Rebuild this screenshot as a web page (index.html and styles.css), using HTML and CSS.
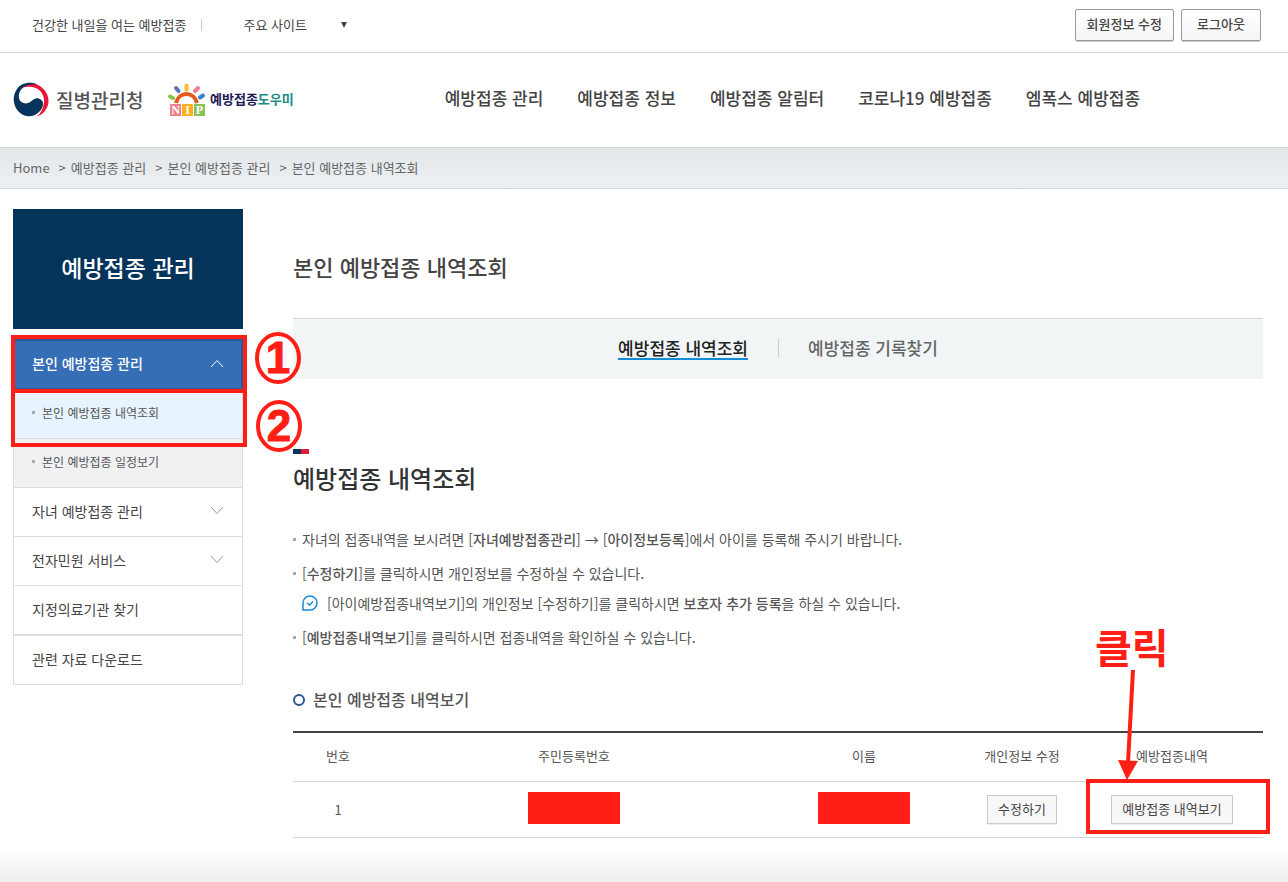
FILE: index.html
```
<!DOCTYPE html>
<html lang="ko">

<head>
    <meta charset="utf-8">
    <meta name="viewport" content="width=device-width, initial-scale=1.0">
    <title>예방접종도우미</title>
    <link rel="stylesheet" href="styles.css">
</head>

<body>
    <div class="topbar">
        <a href="#" class="slogan">건강한 내일을 여는 예방접종</a>
        <button type="button" class="sites">주요 사이트 <span class="caret"></span></button>
        <div class="member">
            <button type="button">회원정보 수정</button>
            <button type="button">로그아웃</button>
        </div>
    </div>

    <header>
        <a href="#" class="logo logo-kdca">
            <svg width="36" height="36" viewBox="0 0 36 36" aria-hidden="true">
                <path fill="#e8173a" d="M6 8C10 2 18 0 25 3C33 7 37 15 35 23C33 29 29 33 24 34.500C28 31 31 25 31 19C31 10 25 6 19 5C13 4 9 5 6 8Z"/>
                <path fill="#06345a" d="M25 2.500C17-1 8 1 4 7C-1 14 0 23 5 29C11 36 21 36 27 29C31 24 31 19 27 17C23 15 20 18 17 20C13 23 7 21 6 16C5 11 8 6 13 3.500C17 2 21 2 25 2.500Z"/>
            </svg>
            <span>질병관리청</span>
        </a>
        <a href="#" class="logo logo-nip">
            <svg width="38" height="34" viewBox="0 0 38 34" aria-hidden="true">
                <g fill="none" stroke-width="4" stroke-linecap="round">
                    <path stroke="#8cc63f" d="M3 13.500L6 15"/>
                    <path stroke="#5b74b8" d="M9 5L11.500 8"/>
                    <path stroke="#fdb92e" d="M19.500 2.500V6.500"/>
                    <path stroke="#f07f8e" d="M31 5L28 8"/>
                    <path stroke="#3b82cc" d="M36 12.500L33 14.500"/>
                    <path stroke="#e35a1c" stroke-linecap="butt" d="M9 20C12 8 27 8 30 20"/>
                </g>
                <rect x="3" y="21" width="11" height="12" fill="#f07f8e"/>
                <rect x="15" y="21" width="11" height="12" fill="#fdb022"/>
                <rect x="27" y="21" width="11" height="12" fill="#86c25a"/>
                <g class="nip-letters">
                    <text x="8.500" y="31">N</text>
                    <text x="20.500" y="31">I</text>
                    <text x="32.500" y="31">P</text>
                </g>
            </svg>
            <span>예방접종<em>도우미</em></span>
        </a>
        <nav>
            <a href="#">예방접종 관리</a>
            <a href="#">예방접종 정보</a>
            <a href="#">예방접종 알림터</a>
            <a href="#">코로나19 예방접종</a>
            <a href="#">엠폭스 예방접종</a>
        </nav>
    </header>

    <div class="breadcrumb">
        <a href="#">Home</a>
        <a href="#">예방접종 관리</a>
        <a href="#">본인 예방접종 관리</a>
        <a href="#">본인 예방접종 내역조회</a>
    </div>

    <div class="container">
        <aside>
            <h2>예방접종 관리</h2>
            <ul class="menu">
                <li class="open">
                    <a href="#">본인 예방접종 관리
                        <svg width="14" height="9" viewBox="0 0 14 9"><path d="M1 8L7 1.500L13 8"/></svg>
                    </a>
                    <span class="frame frame-menu"></span>
                    <span class="frame frame-sub"></span>
                    <svg class="step step-one" width="48" height="54" viewBox="0 0 48 54">
                        <ellipse cx="24" cy="27" rx="21" ry="24"/>
                        <text x="24" y="42">1</text>
                    </svg>
                    <svg class="step step-two" width="48" height="54" viewBox="0 0 48 54">
                        <ellipse cx="24" cy="27" rx="21" ry="24"/>
                        <text x="24" y="42">2</text>
                    </svg>
                </li>
                <li class="sub valgt"><a href="#">본인 예방접종 내역조회</a></li>
                <li class="sub"><a href="#">본인 예방접종 일정보기</a></li>
                <li>
                    <a href="#">자녀 예방접종 관리
                        <svg width="14" height="9" viewBox="0 0 14 9"><path d="M1 1L7 7.500L13 1"/></svg>
                    </a>
                </li>
                <li>
                    <a href="#">전자민원 서비스
                        <svg width="14" height="9" viewBox="0 0 14 9"><path d="M1 1L7 7.500L13 1"/></svg>
                    </a>
                </li>
                <li><a href="#">지정의료기관 찾기</a></li>
                <li class="last"><a href="#">관련 자료 다운로드</a></li>
            </ul>
        </aside>

        <main>
            <h1>본인 예방접종 내역조회</h1>
            <div class="tabs">
                <a href="#" class="selected">예방접종 내역조회</a>
                <a href="#">예방접종 기록찾기</a>
            </div>

            <h2>예방접종 내역조회</h2>
            <ul class="info">
                <li>자녀의 접종내역을 보시려면 [<b>자녀예방접종관리</b>] → [<b>아이정보등록</b>]에서 아이를 등록해 주시기 바랍니다.</li>
                <li>[<b>수정하기</b>]를 클릭하시면 개인정보를 수정하실 수 있습니다.
                    <p>
                        <svg width="16" height="16" viewBox="0 0 16 16" aria-hidden="true">
                            <path d="M1 15V8A7 7 0 1 1 8 15Z"/>
                            <path d="M5 8L7.500 10L11 6.500"/>
                        </svg>
                        <span>[아이예방접종내역보기]의 개인정보 [수정하기]를 클릭하시면 <b>보호자 추가 등록</b>을 하실 수 있습니다.</span>
                    </p>
                </li>
                <li>[<b>예방접종내역보기</b>]를 클릭하시면 접종내역을 확인하실 수 있습니다.</li>
            </ul>

            <h3>본인 예방접종 내역보기</h3>
            <table>
                <thead>
                    <tr>
                        <th class="col-no">번호</th>
                        <th>주민등록번호</th>
                        <th class="col-name">이름</th>
                        <th class="col-edit">개인정보 수정</th>
                        <th class="col-view">예방접종내역</th>
                    </tr>
                </thead>
                <tbody>
                    <tr>
                        <td>1</td>
                        <td><span class="hidden-value"></span></td>
                        <td><span class="hidden-value"></span></td>
                        <td><button type="button">수정하기</button></td>
                        <td class="view">
                            <button type="button">예방접종 내역보기</button>
                            <span class="frame frame-view"></span>
                            <span class="click">클릭</span>
                            <svg class="arrow" width="24" height="112" viewBox="0 0 24 112">
                                <path class="shaft" d="M16 1L11 94"/>
                                <path class="head" d="M1 91L21 92L10 111Z"/>
                            </svg>
                        </td>
                    </tr>
                </tbody>
            </table>
        </main>
    </div>

    <div class="page-end"></div>
</body>

</html>
```
FILE: styles.css
```
* {
    box-sizing: border-box;
}

body {
    margin: 0;
    min-height: 100vh;
    display: flex;
    flex-direction: column;
    font-family: "Noto Sans CJK KR", "Noto Sans", sans-serif;
    font-size: 14px;
    color: #555;
    background-color: #fff;
}

a {
    color: inherit;
    text-decoration: none;
}

button {
    font-family: inherit;
    font-size: 13px;
    color: #444;
    padding: 0;
    cursor: pointer;
}

ul {
    list-style: none;
    margin: 0;
    padding: 0;
}

h1, h2, h3, p {
    margin: 0;
}

/* top line */

.topbar {
    display: flex;
    align-items: center;
    height: 53px;
    padding: 0 27px 3px 32px;
    border-bottom: 1px solid #d5d5d5;
    font-size: 13px;
    color: #444;
}

.slogan {
    display: flex;
    align-items: center;
}

.slogan::after {
    content: "";
    height: 12px;
    margin-left: 15px;
    border-left: 1px solid #ccc;
}

.sites {
    display: flex;
    align-items: center;
    gap: 34px;
    margin-left: 41px;
    border: 0;
    background: none;
}

.caret {
    border: 3px solid transparent;
    border-top: 6px solid #444;
    border-bottom: 0;
}

.member {
    display: flex;
    gap: 7px;
    margin-left: auto;
}

.member button {
    height: 32px;
    min-width: 80px;
    padding: 0 11px 2px;
    font-weight: 500;
    border: 1px solid #999;
    border-radius: 2px;
    background: linear-gradient(#fff, #f5f5f5);
    box-shadow: 0 1px 0 #ccc;
}

/* logos and main menu */

header {
    display: flex;
    align-items: center;
    height: 95px;
    padding-left: 13px;
    border-bottom: 1px solid #d5d5d5;
}

.logo {
    display: flex;
    align-items: center;
}

.logo-kdca {
    gap: 7px;
    width: 154px;
    font-size: 19px;
    font-weight: 500;
}

.logo-kdca span {
    padding-bottom: 2px;
}

.logo-nip {
    gap: 5px;
    font-size: 13px;
    font-weight: bold;
    color: #201a54;
}

.logo-nip span {
    padding-bottom: 3px;
}

.logo-nip em {
    font-style: normal;
    color: #218a85;
}

.nip-letters {
    font-family: "Liberation Serif", serif;
    font-size: 12px;
    font-weight: bold;
    fill: #fff;
    text-anchor: middle;
}

nav {
    display: flex;
    gap: 34px;
    margin-left: 151px;
    padding-bottom: 5px;
    font-size: 17px;
    font-weight: 500;
    color: #444;
}

.breadcrumb {
    display: flex;
    align-items: center;
    height: 41px;
    padding: 0 0 2px 13px;
    border-bottom: 1px solid #d5d5d5;
    font-size: 13px;
    color: #666;
    background: linear-gradient(#e3e7ea, #ecf0f3);
}

.breadcrumb a + a::before {
    content: ">";
    margin: 0 5px 0 9px;
}

/* side menu */

.container {
    display: flex;
    gap: 50px;
    padding: 20px 25px 0 13px;
}

aside {
    flex: 0 0 230px;
}

aside h2 {
    height: 120px;
    line-height: 116px;
    text-align: center;
    font-size: 23px;
    font-weight: 500;
    color: #fff;
    background-color: #04345a;
}

.menu {
    margin-top: 10px;
}

.menu li {
    height: 49px;
    border: 1px solid #ddd;
    border-top: 0;
    color: #444;
}

.menu a {
    display: flex;
    justify-content: space-between;
    align-items: center;
    height: 100%;
    padding: 0 18px 3px;
}

.menu svg {
    fill: none;
    stroke: #999;
}

.menu .open {
    position: relative;
    height: 51px;
    border: 2px solid #2b579b;
    font-weight: 500;
    color: #fff;
    background-color: #356eb5;
}

.menu .open > a {
    padding: 0 17px 3px;
}

.open > a svg {
    stroke: #fff;
}

.menu .sub {
    font-size: 12px;
    color: #555;
    background-color: #f0f1f3;
}

.menu .valgt {
    background-color: #e7f4ff;
}

.menu .sub a {
    justify-content: flex-start;
    gap: 7px;
}

.sub a::before,
.info li::before {
    content: "";
    width: 3px;
    height: 3px;
    background-color: #aaa;
}

.menu .last {
    height: 50px;
    border-top: 1px solid #ddd;
}

/* content */

main {
    flex: 1;
    min-width: 0;
}

h1 {
    margin-top: 41px;
    line-height: 32px;
    font-size: 22px;
    font-weight: 500;
    color: #444;
}

.tabs {
    display: flex;
    justify-content: center;
    align-items: center;
    height: 61px;
    margin-top: 36px;
    border-top: 1px solid #d5d5d5;
    font-size: 17px;
    font-weight: 500;
    color: #666;
    background-color: #f1f5f6;
}

.tabs a {
    line-height: 20px;
    border-bottom: 2px solid transparent;
}

.tabs a + a {
    display: flex;
    align-items: center;
}

.tabs a + a::before {
    content: "";
    height: 18px;
    margin: 0 29px 0 30px;
    border-left: 1px solid #ccc;
}

.tabs .selected {
    color: #222;
    border-color: #168bd8;
}

main h2 {
    margin-top: 70px;
    line-height: 36px;
    font-size: 24px;
    font-weight: 500;
    color: #333;
}

main h2::before {
    content: "";
    display: block;
    width: 16px;
    height: 5px;
    margin-bottom: 6px;
    background: linear-gradient(to right, #04345a 50%, #e31b3e 50%);
}

.info {
    margin-top: 28px;
    line-height: 30px;
}

.info li {
    position: relative;
    margin-bottom: 4px;
    padding-left: 9px;
}

.info li::before {
    position: absolute;
    left: 0;
    top: 14px;
}

.info b {
    font-weight: 500;
}

.info p {
    display: flex;
    align-items: center;
    gap: 9px;
}

.info svg {
    fill: none;
    stroke: #168bd8;
    stroke-width: 1.5;
}

h3 {
    display: flex;
    align-items: center;
    gap: 8px;
    margin-top: 32px;
    line-height: 30px;
    font-size: 16px;
    font-weight: 500;
}

h3::before {
    content: "";
    width: 8px;
    height: 8px;
    margin-top: 2px;
    border: 2px solid #2b579b;
    border-radius: 50%;
}

table {
    width: 100%;
    margin-top: 17px;
    table-layout: fixed;
    border-spacing: 0;
    border-top: 2px solid #444;
    font-size: 13px;
    text-align: center;
}

th, td {
    padding: 0;
    border-bottom: 1px solid #d5d5d5;
}

th {
    height: 49px;
    padding-bottom: 3px;
    font-weight: normal;
}

td {
    height: 56px;
    vertical-align: middle;
}

.col-no {
    width: 90px;
}

.col-name {
    width: 198px;
}

.col-edit {
    width: 118px;
}

.col-view {
    width: 182px;
}

td button {
    height: 29px;
    padding: 0 10px 2px;
    border: 1px solid #cacad6;
    background-color: #f7f7f7;
    box-shadow: 0 1px 0 #eee;
}

.hidden-value {
    display: block;
    width: 92px;
    height: 32px;
    margin: 0 auto 3px;
    background-color: #ff1f17;
}

.page-end {
    height: 34px;
    margin-top: auto;
    background: linear-gradient(#fff, #eee);
}

/* red marks on top of the page */

.frame {
    position: absolute;
    border: 4px solid #ff1f17;
}

.frame-menu {
    left: -4px;
    right: -6px;
    top: -6px;
    height: 58px;
}

.frame-sub {
    left: -4px;
    right: -6px;
    top: 48px;
    height: 58px;
}

.menu .step {
    position: absolute;
    stroke: #ff1f17;
    stroke-width: 4px;
}

.step text {
    font-family: "Liberation Sans", sans-serif;
    font-size: 44px;
    font-weight: bold;
    text-anchor: middle;
    fill: #ff1f17;
    stroke-width: 1px;
}

.step-one {
    left: 239px;
    top: -10px;
}

.step-two {
    left: 240px;
    top: 58px;
}

.view {
    position: relative;
}

.frame-view {
    left: 5px;
    right: -7px;
    top: -3px;
    bottom: 3px;
}

.click {
    position: absolute;
    left: 14px;
    bottom: 161px;
    line-height: 60px;
    font-size: 40px;
    font-weight: bold;
    color: #ff1f17;
}

.arrow {
    position: absolute;
    left: 36px;
    bottom: 56px;
    fill: #ff1f17;
}

.arrow .shaft {
    stroke: #ff1f17;
    stroke-width: 4px;
}
```
